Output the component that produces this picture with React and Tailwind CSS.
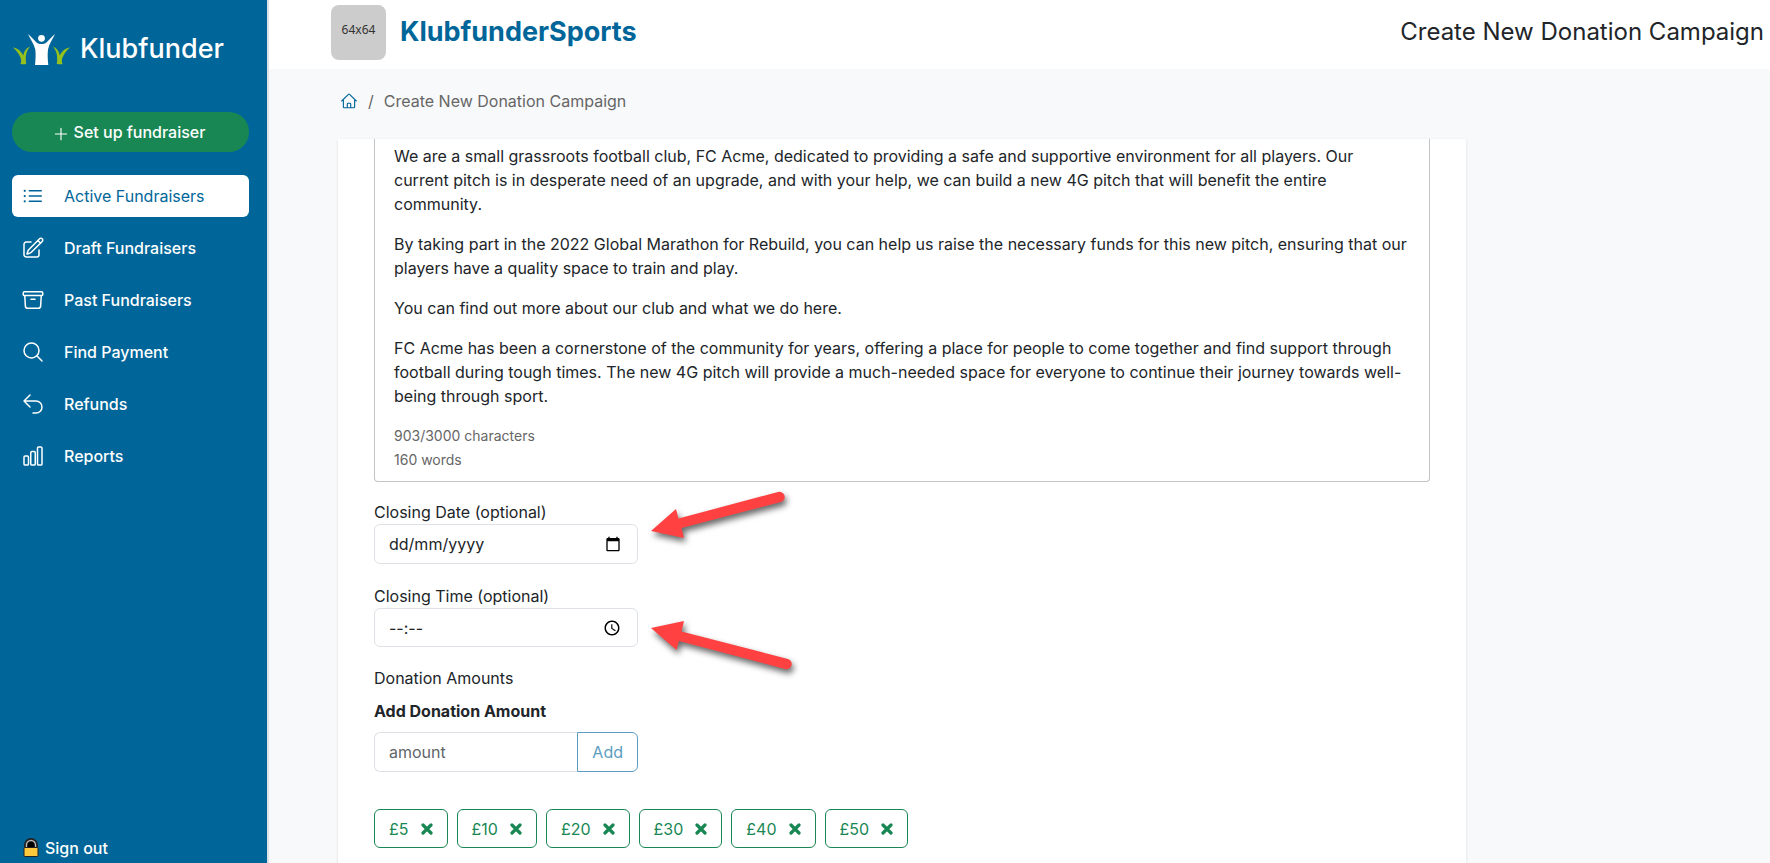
import React, { useState } from 'react';
import {
  HiOutlinePlus,
  HiOutlineListBullet,
  HiOutlinePencilSquare,
  HiOutlineArchiveBox,
  HiOutlineMagnifyingGlass,
  HiOutlineArrowUturnLeft,
  HiOutlineChartBar,
  HiOutlineHome
} from 'react-icons/hi2';

const navItems = [
  { label: 'Active Fundraisers', icon: HiOutlineListBullet, active: true },
  { label: 'Draft Fundraisers', icon: HiOutlinePencilSquare },
  { label: 'Past Fundraisers', icon: HiOutlineArchiveBox },
  { label: 'Find Payment', icon: HiOutlineMagnifyingGlass },
  { label: 'Refunds', icon: HiOutlineArrowUturnLeft },
  { label: 'Reports', icon: HiOutlineChartBar }
];

const paragraphs = [
  'We are a small grassroots football club, FC Acme, dedicated to providing a safe and supportive environment for all players. Our current pitch is in desperate need of an upgrade, and with your help, we can build a new 4G pitch that will benefit the entire community.',
  'By taking part in the 2022 Global Marathon for Rebuild, you can help us raise the necessary funds for this new pitch, ensuring that our players have a quality space to train and play.',
  'You can find out more about our club and what we do here.',
  'FC Acme has been a cornerstone of the community for years, offering a place for people to come together and find support through football during tough times. The new 4G pitch will provide a much-needed space for everyone to continue their journey towards well-being through sport.'
];

const Logo = () => (
  <svg viewBox="0 0 58 32" className="w-[58px] h-8" aria-hidden="true">
    <g fill="#95c11f">
      <path d="M1 14.500c4 .5 8 3 10.200 8C12 18 14 15 18 13.500c-3.500 4.500-5 9-3.800 17.500-2 .4-4 .4-5.700 0 1-2.500 1-4.500-.5-7.500C6.500 20 4 17 1 14.500z" />
      <path d="M58 14.500c-4 .5-8 3-10.200 8C47 18 45 15 41 13.500c3.500 4.500 5 9 3.800 17.500 2 .4 4 .4 5.700 0-1-2.500-1-4.500.5-7.500 1.500-3.500 4-6.500 7-9z" />
    </g>
    <g fill="#fff">
      <circle cx="29.500" cy="5.300" r="3.400" />
      <path d="M16 1c3.500 3 6 6 8.500 8.500 3 2 7 2 10 0C37 7 39.500 4 43 1c-2.500 5.500-6 10-7 15.500-.6 5-.3 10 .3 15.500H23c.6-5.500.9-10.500.3-15.500C22 11 18.500 6.500 16 1z" />
    </g>
  </svg>
);

const LockIcon = () => (
  <svg viewBox="0 0 16 20" className="w-4 h-5" aria-hidden="true">
    <path d="M2 10V7a6 6 0 0 1 12 0v3z" fill="#000" stroke="#222" strokeWidth="2" />
    <path d="M3.500 10V7a4.500 4.500 0 0 1 9 0v3" fill="none" stroke="#bbb" strokeWidth="1.400" />
    <rect x="1" y="9.500" width="14" height="9" rx="1" fill="#ffc83d" stroke="#222" />
  </svg>
);

const CalendarIcon = () => (
  <svg viewBox="0 0 24 24" className="w-4 h-4" aria-hidden="true">
    <path d="M20 3h-1V1h-2v2H7V1H5v2H4c-1.100 0-2 .9-2 2v16c0 1.100.9 2 2 2h16c1.100 0 2-.9 2-2V5c0-1.100-.9-2-2-2zm0 18H4V8h16v13z" />
  </svg>
);

const ClockIcon = () => (
  <svg viewBox="0 0 24 24" className="w-[18px] h-[18px]" aria-hidden="true">
    <path d="M12 2C6.500 2 2 6.500 2 12s4.500 10 10 10 10-4.500 10-10S17.500 2 12 2zm0 18c-4.400 0-8-3.600-8-8s3.600-8 8-8 8 3.600 8 8-3.600 8-8 8zm.5-13H11v6l5.200 3.200.8-1.300-4.500-2.700V7z" />
  </svg>
);

const Sidebar = () => (
  <aside className="w-[269px] shrink-0 flex flex-col px-3 bg-[#006699] border-r-2 border-[#dee2e6] text-white">
    <a href="#" className="flex items-center gap-2.5 h-[98px]">
      <Logo />
      <span className="text-[27px] leading-8 font-medium">Klubfunder</span>
    </a>
    <button type="button" className="mt-3.5 h-10 mr-1.5 shrink-0 flex items-center justify-center gap-1 pr-1 rounded-full bg-[#198754] font-medium">
      <HiOutlinePlus className="w-[18px] h-[18px] mt-1" />
      Set up fundraiser
    </button>
    <nav className="mt-[23px] mr-1.5 flex flex-col gap-2.5">
      {navItems.map(({ label, icon: Icon, active }) => (
        <a
          key={label}
          href="#"
          className={`h-[42px] flex items-center gap-[19px] pl-[9px] rounded-md ${active ? 'bg-white text-[#006699]' : 'font-medium'}`}
        >
          <Icon className="w-6 h-6" />
          {label}
        </a>
      ))}
    </nav>
    <a href="#" className="mt-auto pl-[11px] pb-[3px] flex items-center gap-1.5 font-medium">
      <LockIcon />
      Sign out
    </a>
  </aside>
);

const DonationForm = () => {
  const [closingDate, setClosingDate] = useState('');
  const [closingTime, setClosingTime] = useState('');
  const [amount, setAmount] = useState('');
  const [amounts, setAmounts] = useState([5, 10, 20, 30, 40, 50]);

  const handleAdd = () => {
    const value = Number(amount);
    if (value > 0 && !amounts.includes(value)) {
      setAmounts(prev => [...prev, value].sort((a, b) => a - b));
    }
    setAmount('');
  };

  const handleRemove = (value) => {
    setAmounts(prev => prev.filter(a => a !== value));
  };

  return (
    <form onSubmit={(e) => e.preventDefault()} className="flex-1 w-full max-w-[1128px] px-9 pb-4 bg-white shadow-sm">
      <div className="px-[19px] pt-[5px] pb-[9px] border border-t-0 border-[#c4c4c4] rounded-b">
        {paragraphs.map(text => (
          <p key={text} className="mb-4">{text}</p>
        ))}
        <div className="text-sm leading-6 text-[#666]">
          <p>903/3000 characters</p>
          <p>160 words</p>
        </div>
      </div>

      <div className="relative mt-[18px] w-[264px]">
        <label htmlFor="closingDate" className="block">Closing Date (optional)</label>
        <div className="flex items-center h-10 pl-3.5 pr-4 border border-[#dee2e6] rounded-md">
          <input
            id="closingDate"
            type="text"
            value={closingDate}
            onChange={(e) => setClosingDate(e.target.value)}
            placeholder="dd/mm/yyyy"
            className="flex-1 min-w-0 outline-none placeholder:text-[#212529]"
          />
          <button type="button" aria-label="Pick a date"><CalendarIcon /></button>
        </div>
        <svg viewBox="0 0 150 60" className="absolute left-full top-0 w-[150px] h-[60px] overflow-visible drop-shadow-[2px_4px_3px_rgba(0,0,0,0.6)]" aria-hidden="true">
          <path d="M13 31L38 9l2.500 9.500L140-8a5 5 0 0 1 3 10L43.500 28l2.500 10z" fill="#ff4141" />
        </svg>
      </div>

      <div className="relative mt-5 w-[264px]">
        <label htmlFor="closingTime" className="block">Closing Time (optional)</label>
        <div className="flex items-center h-[39px] pl-3.5 pr-4 border border-[#dee2e6] rounded-md">
          <input
            id="closingTime"
            type="text"
            value={closingTime}
            onChange={(e) => setClosingTime(e.target.value)}
            placeholder="--:--"
            className="flex-1 min-w-0 outline-none placeholder:text-[#212529]"
          />
          <button type="button" aria-label="Pick a time"><ClockIcon /></button>
        </div>
        <svg viewBox="0 0 160 90" className="absolute left-full top-0 w-40 h-[90px] overflow-visible drop-shadow-[2px_4px_3px_rgba(0,0,0,0.6)]" aria-hidden="true">
          <path d="M13 44L46 37l-2.500 10.500L150 75a5 5 0 0 1-3 10L41 57l-2.500 9z" fill="#ff4141" />
        </svg>
      </div>

      <p className="mt-[19px]">Donation Amounts</p>
      <label htmlFor="amount" className="block mt-[9px] font-bold">Add Donation Amount</label>
      <div className="flex mt-[9px] h-10 w-[264px]">
        <input
          id="amount"
          type="text"
          value={amount}
          onChange={(e) => setAmount(e.target.value)}
          placeholder="amount"
          className="flex-1 min-w-0 pl-3.5 border border-r-0 border-[#dee2e6] rounded-l-md outline-none placeholder:text-[#61666b]"
        />
        <button type="button" onClick={handleAdd} className="px-3.5 border border-[#5c9dbf] rounded-r-md text-[#5c9dbf]">
          Add
        </button>
      </div>

      <div className="mt-[37px] flex flex-wrap gap-[9px]">
        {amounts.map(value => (
          <button
            key={value}
            type="button"
            onClick={() => handleRemove(value)}
            className="flex items-center gap-3 h-[39px] px-3.5 border border-[#198754] rounded-md text-[#198754]"
          >
            £{value}
            <svg viewBox="0 0 12 12" className="w-3 h-3" aria-hidden="true">
              <path d="M2 2l8 8M10 2l-8 8" stroke="currentColor" strokeWidth="3.200" strokeLinecap="round" />
            </svg>
          </button>
        ))}
      </div>
    </form>
  );
};

const App = () => {
  return (
    <div className="flex h-screen overflow-hidden font-['Inter',sans-serif] text-base text-[#212529]">
      <Sidebar />
      <main className="flex-1 min-w-0 flex flex-col bg-[#f8f9fb]">
        <header className="h-[69px] shrink-0 flex items-center pb-[5px] pl-[62px] pr-1.5 bg-white">
          <div className="w-[55px] h-[55px] rounded-lg bg-[#ccc] flex items-center justify-center pb-1 font-['Noto_Sans',sans-serif] text-xs text-[#333]">
            64x64
          </div>
          <h1 className="ml-3.5 text-[27px] leading-8 font-bold text-[#006699]">KlubfunderSports</h1>
          <h2 className="ml-auto text-2xl">Create New Donation Campaign</h2>
        </header>
        <nav className="h-[70px] shrink-0 flex items-center pb-[7px] pl-[71px] text-[#666]" aria-label="Breadcrumb">
          <a href="#" aria-label="Home" className="text-[#006699]"><HiOutlineHome className="w-[18px] h-[18px]" /></a>
          <span className="mx-2.5">/</span>
          <span>Create New Donation Campaign</span>
        </nav>
        <div className="flex-1 min-h-0 flex flex-col pl-[69px]">
          <DonationForm />
        </div>
      </main>
    </div>
  );
};

export default App;
